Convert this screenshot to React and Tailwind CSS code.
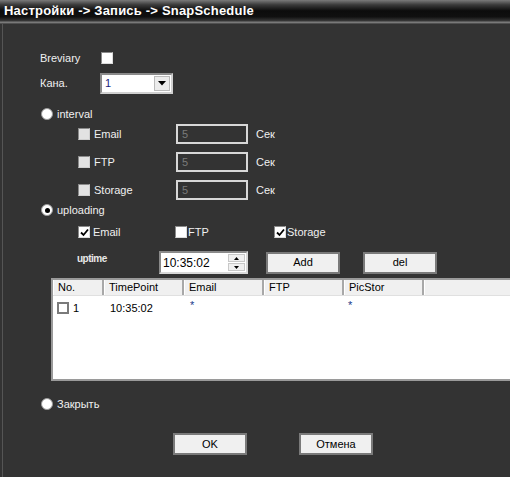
import React from "react";

const F = { fontFamily: '"Liberation Sans", Arial, sans-serif' };

function Radio({ checked }) {
  return (
    <div className="w-[12px] h-[12px] rounded-full bg-white border border-[#9a9a9a] flex items-center justify-center shrink-0">
      {checked && <div className="w-[5px] h-[5px] rounded-full bg-black" />}
    </div>
  );
}

function Check({ checked, disabled }) {
  return (
    <div
      className={`w-[12px] h-[12px] shrink-0 border-t-[1px] border-l-[1px] border-[#8a8a8a] border-b-[1px] border-r-[1px] flex items-center justify-center ${
        disabled ? "bg-[#e2e2e2] border-b-[#cfcfcf] border-r-[#cfcfcf]" : "bg-white border-b-[#dcdcdc] border-r-[#dcdcdc]"
      }`}
    >
      {checked && (
        <svg width="9" height="9" viewBox="0 0 9 9">
          <path d="M1 4.5 L3.5 7 L8 1.5" stroke="#000" strokeWidth="1.8" fill="none" />
        </svg>
      )}
    </div>
  );
}

function Btn({ children, w = "w-[74px]", h = "h-[22px]" }) {
  return (
    <div
      className={`${w} ${h} bg-[#f0f0f0] border-[2px] border-[#7a7a7a] flex items-center justify-center text-[11px] text-black`}
    >
      {children}
    </div>
  );
}

function SecRow({ label }) {
  return (
    <div className="flex items-center h-[20px]">
      <div className="w-[173px] flex items-center pl-[75px] shrink-0">
        <Check disabled />
        <span className="ml-[4px] text-[11px] text-[#f0f0f0] whitespace-nowrap">{label}</span>
      </div>
      <div className="w-[72px] h-[20px] border-[2px] border-[#d8d8d8] bg-[#333333] flex items-center pl-[4px] text-[11px] text-[#7a7a7a] shrink-0">
        5
      </div>
      <span className="ml-[8px] text-[11px] text-[#f0f0f0]">Сек</span>
    </div>
  );
}

export default function App() {
  return (
    <div className="w-[510px] h-[477px] bg-[#333333] overflow-hidden flex flex-col" style={F}>
      {/* title bar */}
      <div className="h-[24px] shrink-0 bg-[linear-gradient(to_bottom,#7a7a7a_0%,#3a3a3a_20%,#0c0c0c_45%,#101010_70%,#3a3a3a_88%,#8a8a8a_92%,#3c3c3c_100%)] flex items-center pl-[4px]">
        <span className="text-white font-bold text-[13px] leading-none -mt-[4px] tracking-[0.2px]">
          Настройки -&gt; Запись -&gt; SnapSchedule
        </span>
      </div>
      <div className="flex-1 border-l-[1px] border-[#555] ml-[2px] flex flex-col">
        {/* Breviary */}
        <div className="mt-[24px] h-[20px] flex items-center">
          <span className="w-[98px] pl-[37px] text-[11px] text-[#f0f0f0] shrink-0">Breviary</span>
          <Check />
        </div>
        {/* Kana */}
        <div className="mt-[5px] h-[20px] flex items-center">
          <span className="w-[97px] pl-[37px] text-[11px] text-[#f0f0f0] shrink-0">Кана.</span>
          <div className="w-[73px] h-[21px] bg-white border-[2px] border-t-[#8a8a8a] border-l-[#8a8a8a] border-b-[#d0d0d0] border-r-[#d0d0d0] flex items-center">
            <span className="flex-1 pl-[3px] text-[11px] text-[#1a237e]">1</span>
            <div className="w-[16px] h-[15px] bg-[#ececec] border border-[#bbbbbb] mr-[1px] flex items-center justify-center">
              <svg width="8" height="5" viewBox="0 0 8 5">
                <path d="M0 0 H8 L4 4.5 Z" fill="#000" />
              </svg>
            </div>
          </div>
        </div>
        {/* interval */}
        <div className="mt-[13px] h-[16px] flex items-center pl-[38px]">
          <Radio />
          <span className="ml-[4px] text-[11px] text-[#f0f0f0]">interval</span>
        </div>
        <div className="mt-[2px]"><SecRow label="Email" /></div>
        <div className="mt-[8px]"><SecRow label="FTP" /></div>
        <div className="mt-[8px]"><SecRow label="Storage" /></div>
        {/* uploading */}
        <div className="mt-[2px] h-[16px] flex items-center pl-[38px]">
          <Radio checked />
          <span className="ml-[4px] text-[11px] text-[#f0f0f0]">uploading</span>
        </div>
        <div className="mt-[6px] h-[16px] flex items-center pl-[75px]">
          <div className="w-[97px] flex items-center shrink-0">
            <Check checked />
            <span className="ml-[3px] text-[11px] text-[#f0f0f0]">Email</span>
          </div>
          <div className="w-[99px] flex items-center shrink-0">
            <Check />
            <span className="ml-[1px] text-[11px] text-[#f0f0f0]">FTP</span>
          </div>
          <div className="flex items-center">
            <Check checked />
            <span className="ml-[1px] text-[11px] text-[#f0f0f0]">Storage</span>
          </div>
        </div>
        {/* uptime */}
        <div className="mt-[11px] h-[23px] flex items-center">
          <span className="w-[156px] pl-[74px] text-[10px] font-bold text-[#e8e8e8] -mt-[8px] tracking-[-0.5px] shrink-0">uptime</span>
          <div className="w-[89px] h-[23px] bg-white border-[2px] border-t-[#8a8a8a] border-l-[#8a8a8a] border-b-[#d8d8d8] border-r-[#d8d8d8] flex items-center shrink-0">
            <span className="flex-1 pl-[2px] text-[12px] text-black">10:35:02</span>
            <div className="flex flex-col gap-[1px] mr-[1px]">
              <div className="w-[17px] h-[8px] bg-[#f0f0f0] border border-[#c8c8c8] flex items-center justify-center">
                <svg width="5" height="3" viewBox="0 0 5 3"><path d="M0 3 H5 L2.5 0 Z" fill="#000" /></svg>
              </div>
              <div className="w-[17px] h-[8px] bg-[#f0f0f0] border border-[#c8c8c8] flex items-center justify-center">
                <svg width="5" height="3" viewBox="0 0 5 3"><path d="M0 0 H5 L2.5 3 Z" fill="#000" /></svg>
              </div>
            </div>
          </div>
          <div className="ml-[18px]"><Btn>Add</Btn></div>
          <div className="ml-[23px]"><Btn>del</Btn></div>
        </div>
        {/* table */}
        <div className="mt-[4px] ml-[48px] h-[103px] w-[470px] bg-white border-[2px] border-[#9a9a9a] border-r-0 flex flex-col shrink-0">
          <div className="h-[16px] flex bg-[#f0f0f0] border-b border-[#e0e0e0]">
            {["No.", "TimePoint", "Email", "FTP", "PicStor"].map((t, i) => (
              <div
                key={t}
                className={`${i === 0 ? "w-[51px]" : "w-[80px]"} h-full border-r-[2px] border-[#a8a8a8] border-l border-l-white flex items-center pl-[4px] text-[11px] text-black`}
              >
                {t}
              </div>
            ))}
            <div className="flex-1 border-l border-l-white" />
          </div>
          <div className="flex h-[24px] items-center text-[11px] text-black">
            <div className="w-[51px] flex items-center pl-[4px]">
              <div className="w-[12px] h-[12px] border-[2px] border-[#7a7a7a] bg-white" />
              <span className="ml-[4px]">1</span>
            </div>
            <div className="w-[80px] pl-[6px]">10:35:02</div>
            <div className="w-[80px] pl-[6px] text-[#1a3a8a] -mt-[6px]">*</div>
            <div className="w-[80px]" />
            <div className="w-[80px] pl-[4px] text-[#1a3a8a] -mt-[6px]">*</div>
          </div>
        </div>
        {/* Закрыть */}
        <div className="mt-[15px] h-[16px] flex items-center pl-[38px]">
          <Radio />
          <span className="ml-[4px] text-[11px] text-[#f0f0f0]">Закрыть</span>
        </div>
        <div className="mt-[21px] flex pl-[170px]">
          <Btn>OK</Btn>
          <div className="ml-[52px]"><Btn>Отмена</Btn></div>
        </div>
      </div>
    </div>
  );
}
